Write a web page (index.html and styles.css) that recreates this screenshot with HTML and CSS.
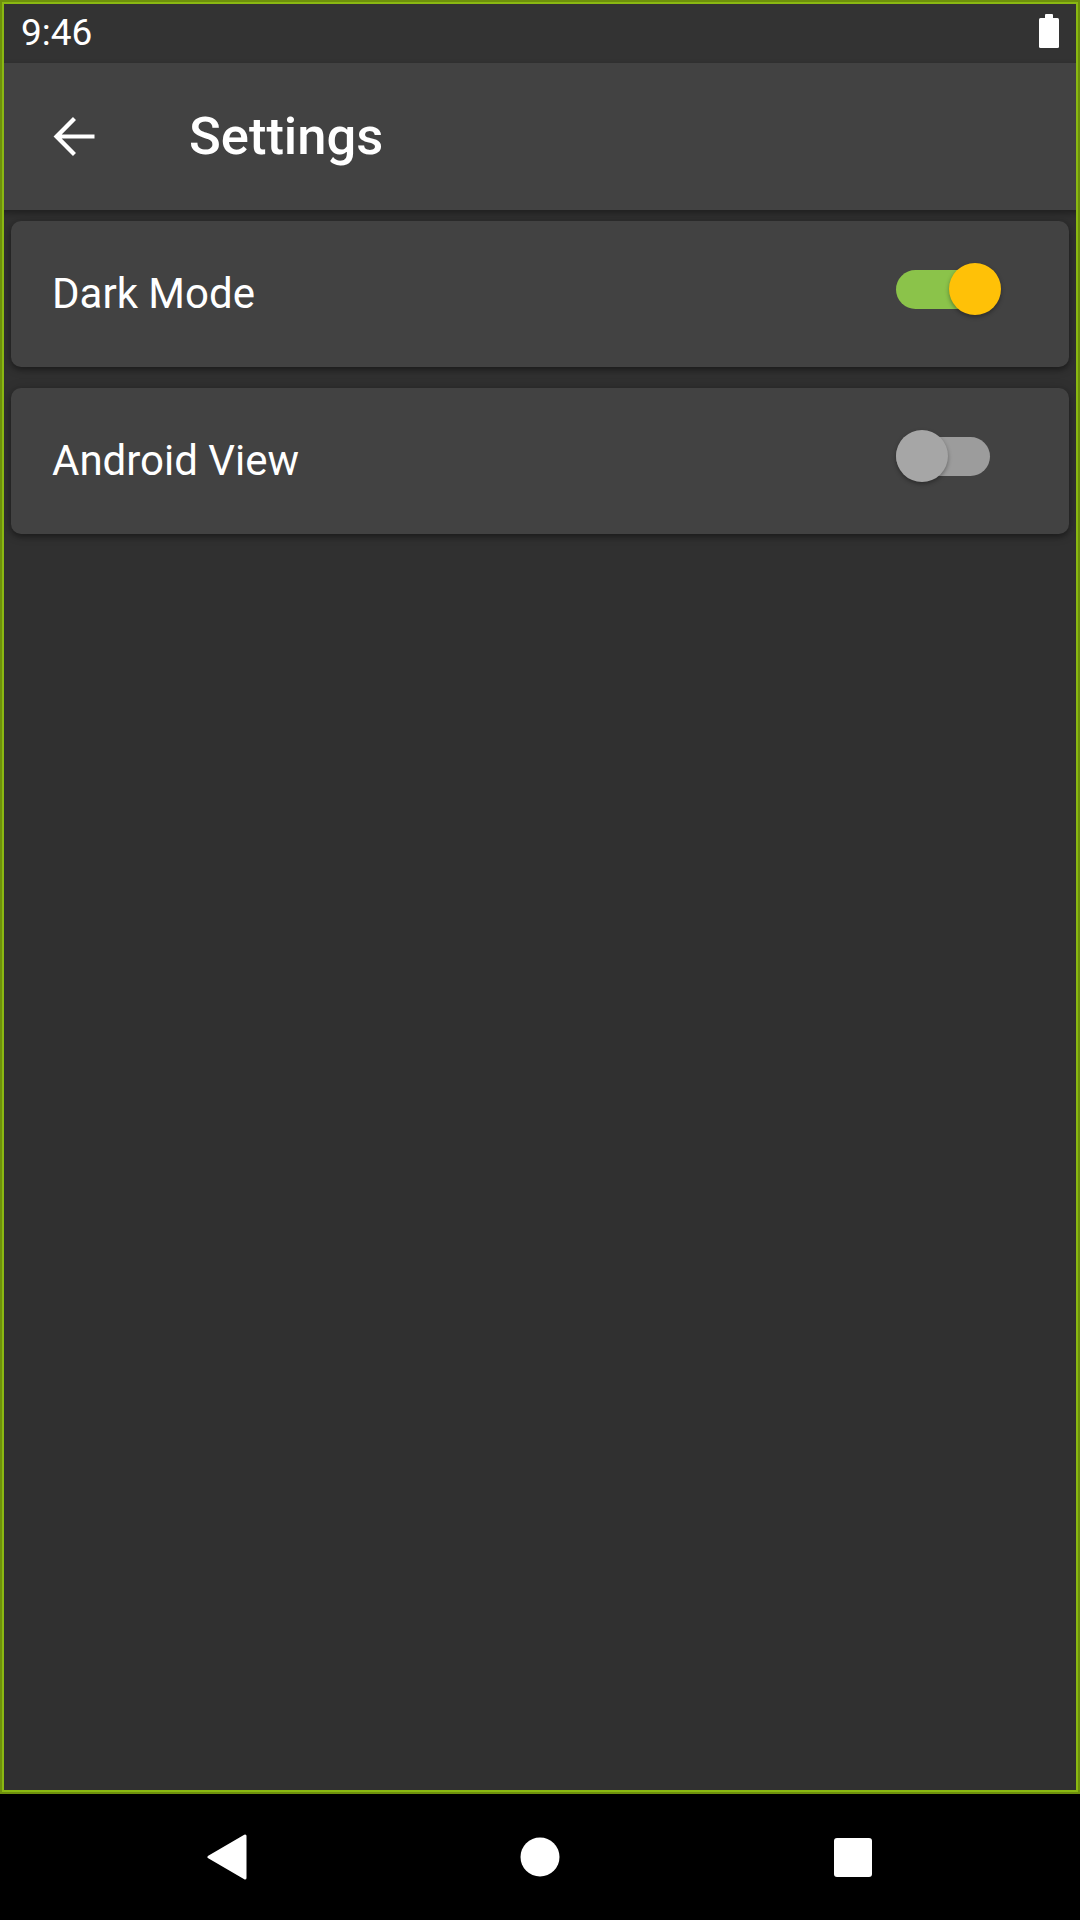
FILE: index.html
```html
<!DOCTYPE html>
<html>
<head>
<meta charset="utf-8">
<link rel="stylesheet" href="styles.css">
</head>
<body>
<div class="screen">
  <div class="frame">
    <div class="statusbar">
      <span class="clock">9:46</span>
      <svg class="battery" width="20" height="34" viewBox="0 0 20 34">
        <rect x="6" y="0" width="8" height="5" rx="1" fill="#fff"/>
        <rect x="0" y="4" width="20" height="30" rx="1.5" fill="#fff"/>
      </svg>
    </div>
    <div class="toolbar">
      <svg class="back-icon" width="63" height="63" viewBox="0 0 24 24">
        <path d="M20 11.2H7.5l5.45-5.45L11.8 4.6 4.4 12l7.4 7.4 1.15-1.15-5.45-5.45H20z" fill="#fff"/>
      </svg>
      <h1 class="title">Settings</h1>
    </div>
    <div class="list">
      <div class="card">
        <span class="label">Dark Mode</span>
        <div class="switch on">
          <div class="track"></div>
          <div class="thumb"></div>
        </div>
      </div>
      <div class="card">
        <span class="label">Android View</span>
        <div class="switch off">
          <div class="track"></div>
          <div class="thumb"></div>
        </div>
      </div>
    </div>
  </div>
  <div class="navbar">
    <div class="nav-btn">
      <svg width="42" height="46" viewBox="0 0 42 46">
        <path d="M3 23 L39 2 L39 44 Z" fill="#fff" stroke="#fff" stroke-width="3" stroke-linejoin="round"/>
      </svg>
    </div>
    <div class="nav-btn">
      <svg width="40" height="40" viewBox="0 0 40 40">
        <circle cx="20" cy="20" r="19.5" fill="#fff"/>
      </svg>
    </div>
    <div class="nav-btn">
      <svg width="40" height="40" viewBox="0 0 40 40">
        <rect x="1" y="1" width="38" height="39" rx="3" fill="#fff"/>
      </svg>
    </div>
  </div>
</div>
</body>
</html>
```

FILE: styles.css
```css
* {
  box-sizing: border-box;
}

html, body {
  margin: 0;
  padding: 0;
  background: #000;
}

body {
  font-family: Roboto, "Noto Sans", "Liberation Sans", sans-serif;
  color: #fff;
}

.screen {
  width: 1080px;
  height: 1920px;
  display: flex;
  flex-direction: column;
  background: #000;
}

.frame {
  position: relative;
  height: 1794px;
  background: #303030;
  display: flex;
  flex-direction: column;
}

.frame::after {
  content: "";
  position: absolute;
  inset: 0;
  border: 2px solid #6e900c;
  box-shadow: inset 0 0 0 2px #8ab812;
  pointer-events: none;
  z-index: 5;
}

.statusbar {
  height: 63px;
  flex: none;
  background: #333333;
  display: flex;
  align-items: center;
  justify-content: space-between;
  padding: 0 21px 0 21px;
}

.clock {
  font-family: Roboto, sans-serif;
  font-size: 37px;
  color: #fff;
  line-height: 1;
  padding-top: 1px;
}

.battery {
  display: block;
  margin-top: -2px;
}

.toolbar {
  height: 147px;
  flex: none;
  background: #424242;
  display: flex;
  align-items: center;
  padding-left: 42px;
  box-shadow: 0 3px 6px rgba(0, 0, 0, 0.35);
  position: relative;
  z-index: 2;
}

.back-icon {
  display: block;
  flex: none;
}

.title {
  margin: 0 0 0 84px;
  font-size: 52.5px;
  font-weight: 500;
  line-height: 1;
  color: #fff;
}

.list {
  display: flex;
  flex-direction: column;
  gap: 21px;
  padding: 11px 11px 0 11px;
}

.card {
  height: 146px;
  background: #424242;
  border-radius: 10px;
  display: flex;
  align-items: center;
  justify-content: space-between;
  padding-left: 41px;
  box-shadow: 0 3px 5px rgba(0, 0, 0, 0.3), 0 1px 12px rgba(0, 0, 0, 0.2);
}

.label {
  font-size: 42px;
  line-height: 1.17;
  color: #fff;
}

.switch {
  position: relative;
  width: 105px;
  height: 52px;
  margin-right: 68px;
  margin-bottom: 10px;
}

.track {
  position: absolute;
  left: 0;
  top: 7px;
  width: 94px;
  height: 39px;
  border-radius: 20px;
}

.thumb {
  position: absolute;
  top: 0;
  width: 52px;
  height: 52px;
  border-radius: 50%;
  box-shadow: 0 2px 4px rgba(0, 0, 0, 0.35);
}

.switch.on .track {
  background: #8bc34a;
}

.switch.on .thumb {
  left: 53px;
  background: #ffc107;
}

.switch.off .track {
  background: #9c9c9c;
}

.switch.off .thumb {
  left: 0;
  background: #a6a6a6;
}

.navbar {
  flex: 1;
  background: #000;
  display: flex;
  align-items: center;
  justify-content: center;
  gap: 233px;
}

.nav-btn {
  width: 80px;
  height: 80px;
  display: flex;
  align-items: center;
  justify-content: center;
}

.nav-btn svg {
  display: block;
}
```
